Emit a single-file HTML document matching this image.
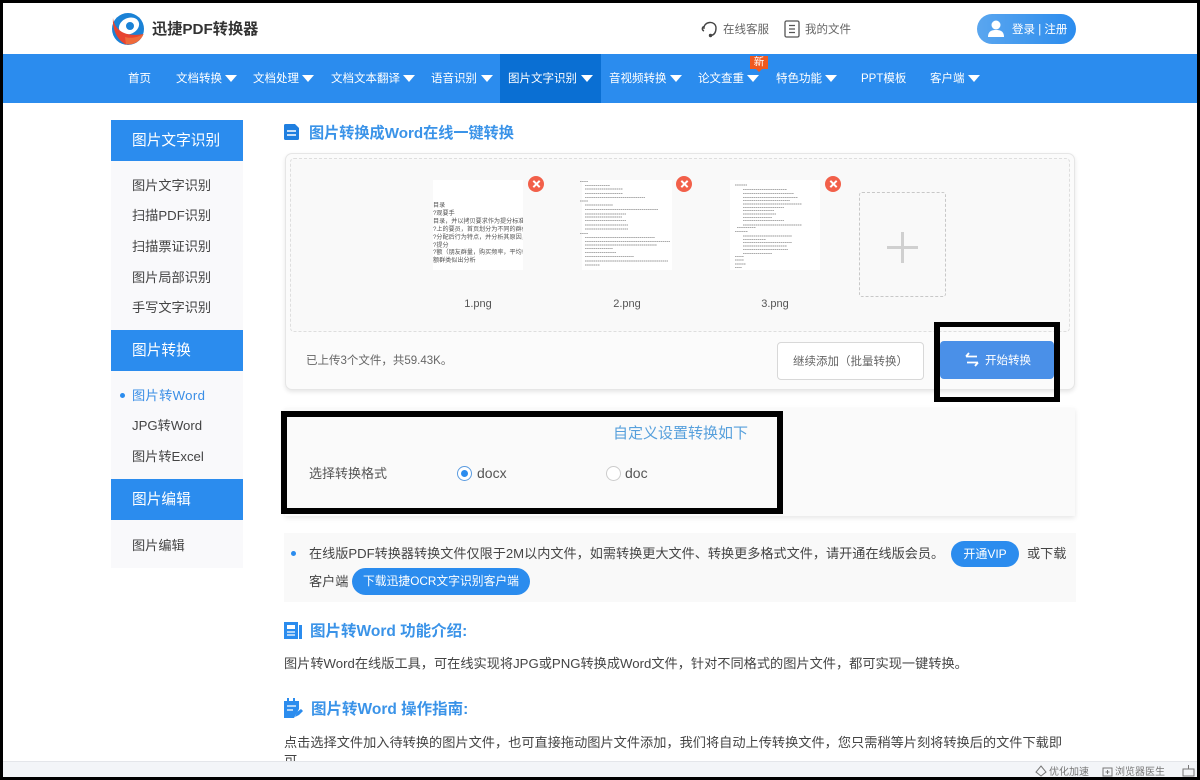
<!DOCTYPE html>
<html lang="zh-CN"><head><meta charset="utf-8"><title>迅捷PDF转换器</title>
<style>
html,body{margin:0;padding:0;background:#fff}
#p{position:relative;width:1200px;height:780px;overflow:hidden;background:#fff;font-family:"Liberation Sans","Noto Sans CJK SC",sans-serif;color:#444}
#p div,#p span.a,#p svg{position:absolute}
.t{position:absolute;white-space:nowrap;line-height:20px}
.n{position:absolute;top:69px;font-size:11.5px;line-height:20px;color:#fff;white-space:nowrap}
.ar{position:absolute;top:75px;width:0;height:0;border-left:6.5px solid transparent;border-right:6.5px solid transparent;border-top:7px solid #fff}
.sh{left:111px;width:132px;height:41px;background:#2b8cee;color:#fff;font-size:14.7px;line-height:42px;text-indent:21px}
.sb{left:111px;width:132px;background:#f9f9fb}
.si{position:absolute;left:132px;font-size:13.2px;line-height:20px;color:#444;white-space:nowrap}
.x{width:16px;height:16px;border-radius:50%;background:#f2604a}
.x:before,.x:after{content:"";position:absolute;left:3.5px;top:7px;width:9px;height:2px;background:#fff;transform:rotate(45deg)}
.x:after{transform:rotate(-45deg)}
.th{background:#fff;width:90px;height:90px;top:180px}
.h3{position:absolute;font-size:15.5px;font-weight:700;color:#3a93e8;line-height:20px;white-space:nowrap}
.ln{fill:none;stroke:#777;stroke-width:.7;stroke-dasharray:1.6 .5}
</style></head><body><div id="p">

<!-- logo -->
<svg style="left:110px;top:12px" width="36" height="35" viewBox="0 0 36 35">
<circle cx="18" cy="17" r="16" fill="#1b82d6"/>
<ellipse cx="19" cy="14" rx="10.500" ry="8" fill="#fff" transform="rotate(-25 19 14)"/>
<circle cx="20" cy="14" r="4" fill="#1b82d6"/>
<path d="M3 6C4 16 13 26 33.500 22C31 29 24 33 16 32.500C8 29 2 18 3 6Z" fill="#e8442f"/>
<path d="M15 25C22 27 28 25 33.500 22C31 29 24 33 16 32.500Z" fill="#ef6a3a"/>
</svg>
<div class="t" style="left:152px;top:20px;font-size:15.200px;font-weight:700;color:#333">迅捷PDF转换器</div>

<!-- head links -->
<svg style="left:700px;top:19px" width="20" height="20" viewBox="0 0 20 20" fill="none" stroke="#444" stroke-width="1.400"><path d="M4 10C3 2 16 1 16 9"/><path d="M4 7.500C2 8 1.500 11 4 12"/><path d="M16 9C16 14 14 16 11 16.500"/><circle cx="10.500" cy="16.500" r="1" fill="#444"/></svg>
<div class="t" style="left:723px;top:20px;font-size:11.500px;color:#666">在线客服</div>
<svg style="left:784px;top:20px" width="16" height="18" viewBox="0 0 16 18" fill="none" stroke="#555" stroke-width="1.300"><rect x="1" y="1" width="14" height="16" rx="1.500"/><path d="M5 5.500H11M5 9H11M5 12.500H11"/></svg>
<div class="t" style="left:805px;top:20px;font-size:11.500px;color:#666">我的文件</div>

<div style="left:977px;top:14px;width:99px;height:30px;border-radius:15px;background:linear-gradient(90deg,#5aa6ef,#2b8cee)"></div>
<svg style="left:987px;top:20px" width="18" height="17" viewBox="0 0 18 17" fill="#fff"><circle cx="9" cy="5" r="4.500"/><path d="M1 17C1 11 5 10 9 10C13 10 17 11 17 17Z"/></svg>
<div class="t" style="left:1012px;top:20px;font-size:11.500px;color:#fff">登录 | 注册</div>

<!-- nav -->
<div style="left:3px;top:54px;width:1194px;height:49px;background:#2b8cee"></div>
<div style="left:500px;top:54px;width:101px;height:49px;background:#0a6fd3"></div>
<span class="n" style="left:128px">首页</span>
<span class="n" style="left:176px">文档转换</span><span class="ar" style="left:225px"></span>
<span class="n" style="left:253px">文档处理</span><span class="ar" style="left:302px"></span>
<span class="n" style="left:331px">文档文本翻译</span><span class="ar" style="left:403px"></span>
<span class="n" style="left:431px">语音识别</span><span class="ar" style="left:481px"></span>
<span class="n" style="left:508px">图片文字识别</span><span class="ar" style="left:581px"></span>
<span class="n" style="left:609px">音视频转换</span><span class="ar" style="left:670px"></span>
<span class="n" style="left:698px">论文查重</span><span class="ar" style="left:747px"></span>
<span class="n" style="left:776px">特色功能</span><span class="ar" style="left:825px"></span>
<span class="n" style="left:861px">PPT模板</span>
<span class="n" style="left:930px">客户端</span><span class="ar" style="left:968px"></span>
<div style="left:750px;top:56px;width:18px;height:13px;background:#f0591f;color:#fff;font-size:10.500px;line-height:13px;text-align:center">新</div>
<div style="left:756px;top:69px;width:0;height:0;border-left:3px solid transparent;border-right:3px solid transparent;border-top:3px solid #f0591f"></div>

<!-- sidebar -->
<div class="sh" style="top:120px">图片文字识别</div>
<div class="sb" style="top:161px;height:169px"></div>
<span class="si" style="top:176px">图片文字识别</span>
<span class="si" style="top:206px">扫描PDF识别</span>
<span class="si" style="top:237px">扫描票证识别</span>
<span class="si" style="top:268px">图片局部识别</span>
<span class="si" style="top:298px">手写文字识别</span>
<div class="sh" style="top:330px">图片转换</div>
<div class="sb" style="top:371px;height:108px"></div>
<div style="left:120px;top:393px;width:5px;height:5px;border-radius:50%;background:#2b8cee"></div>
<span class="si" style="top:386px;color:#3a8ee6;letter-spacing:.35px">图片转Word</span>
<span class="si" style="top:416px">JPG转Word</span>
<span class="si" style="top:447px">图片转Excel</span>
<div class="sh" style="top:479px">图片编辑</div>
<div class="sb" style="top:520px;height:48px"></div>
<span class="si" style="top:536px">图片编辑</span>

<!-- title -->
<svg style="left:284px;top:124px" width="16" height="16" viewBox="0 0 16 16"><path d="M0 1.500Q0 0 1.500 0H11L15 4V14.500Q15 16 13.500 16H1.500Q0 16 0 14.500Z" fill="#1f7fe0"/><path d="M3 7H12M3 11H12" stroke="#fff" stroke-width="1.600"/></svg>
<div class="t" style="left:309px;top:124px;font-size:15.150px;font-weight:700;color:#3a93e8">图片转换成Word在线一键转换</div>

<!-- upload box -->
<div style="left:285px;top:153px;width:788px;height:235px;background:#fbfbfb;border:1px solid #e6e6e6;border-radius:7px;box-shadow:0 2px 4px rgba(0,0,0,.1)"></div>
<div style="left:290px;top:158px;width:778px;height:172px;border:1.500px dashed #dedede;border-radius:4px;background:#f9f9f9"></div>

<div class="th" style="left:433px"></div>
<div style="left:433px;top:202px;width:90px;height:62px;overflow:hidden;font-size:6.100px;line-height:7.900px;color:#555;white-space:nowrap">目录<br>?观要手<br>目录，并以拷贝要求作为提分标准<br>?上的要员，首页划分为不同的群体或子市场<br>?分配后行为特点，并分析其原因，选此基础<br>?提分<br>?额（朋友群量，购买频率，平均每次阶购买<br>额群类似出分析</div>
<div class="x" style="left:528px;top:176px"></div>
<div style="left:433px;top:294px;width:90px;text-align:center;font-size:11px;line-height:20px;color:#555">1.png</div>

<div class="th" style="left:582px"></div>
<svg style="left:580px;top:180px" width="92" height="90">
<path class="ln" d="M0 1.700H8M5 5.700H30M5 9H43M5 13.300H43M5 17.300H65M0 21H8M5 25H33M5 29.300H78M5 34H46M5 37H42M5 40.700H46M5 45H48M5 49H48M0 53.300H8M5 57.300H75M5 61.700H90M5 65H77M5 68.300H33M5 72.700H36M5 76.700H54M5 81H88M5 85H20"/></svg>
<div class="x" style="left:676px;top:176px"></div>
<div style="left:582px;top:294px;width:90px;text-align:center;font-size:11px;line-height:20px;color:#555">2.png</div>

<div class="th" style="left:730px"></div>
<svg style="left:732px;top:182px" width="88" height="90">
<path class="ln" d="M3 3H15M11 7.300H55M11 11.300H62M11 15.700H66M11 18.700H58M11 22H70M11 25.300H52M11 28.700H42M11 32H44M11 35.300H40M11 38.700H52M11 43H70M5 45.700H24M3 49.700H16M11 54H60M11 57.300H34M11 60.700H60M11 64H55M11 67.300H56M11 71.300H40M3 74.700H12M3 78H12M3 82H14M3 85.300H10"/></svg>
<div class="x" style="left:825px;top:176px"></div>
<div style="left:730px;top:294px;width:90px;text-align:center;font-size:11px;line-height:20px;color:#555">3.png</div>

<div style="left:859px;top:192px;width:85px;height:103px;border:1.500px dashed #c8c8c8;border-radius:3px"></div>
<div style="left:887px;top:246px;width:31px;height:3px;background:#d0d0d0"></div>
<div style="left:901px;top:232px;width:3px;height:31px;background:#d0d0d0"></div>

<div class="t" style="left:306px;top:351px;font-size:11.500px;color:#666">已上传3个文件，共59.43K。</div>
<div style="left:777px;top:342px;width:145px;height:36px;background:#fff;border:1px solid #d8d8d8;border-radius:4px;font-size:11.500px;line-height:38px;text-align:center;color:#666">继续添加（批量转换）</div>

<div style="left:934px;top:322px;width:114px;height:70px;border-style:solid;border-color:#000;border-width:5px 6px 5px 6px"></div>
<div style="left:940px;top:341px;width:114px;height:38px;background:#4a90e8;border-radius:4px"></div>
<svg style="left:965px;top:352px" width="14" height="15" viewBox="0 0 14 15" fill="none" stroke="#fff" stroke-width="1.800"><path d="M1 4.500H12M4 1L1 4.500M13 10.500H2M10 14L13 10.500"/></svg>
<div class="t" style="left:985px;top:351px;font-size:11.500px;color:#fff">开始转换</div>

<!-- settings -->
<div style="left:285px;top:408px;width:790px;height:108px;background:#fafafa;box-shadow:0 2px 5px rgba(0,0,0,.1)"></div>
<div style="left:281px;top:411px;width:490px;height:91px;border:6px solid #000;background:#fafafa"></div>
<div class="t" style="left:613px;top:424px;font-size:15px;color:#57a0dc">自定义设置转换如下</div>
<div class="t" style="left:309px;top:464px;font-size:13px;color:#555">选择转换格式</div>
<div style="left:457px;top:466px;width:13px;height:13px;border:1px solid #5a9be0;border-radius:50%;background:#fff"></div>
<div style="left:461px;top:470px;width:7px;height:7px;border-radius:50%;background:#2b8cee"></div>
<div class="t" style="left:477px;top:463px;font-size:14px;color:#555">docx</div>
<div style="left:606px;top:466px;width:13px;height:13px;border:1px solid #ccc;border-radius:50%;background:#fff"></div>
<div class="t" style="left:625px;top:463px;font-size:14px;color:#555">doc</div>

<!-- notice -->
<div style="left:284px;top:533px;width:792px;height:69px;background:#f9f9f9"></div>
<div style="left:291px;top:551px;width:5px;height:5px;border-radius:50%;background:#2b8cee"></div>
<div class="t" style="left:309px;top:544px;font-size:13.140px;color:#444">在线版PDF转换器转换文件仅限于2M以内文件，如需转换更大文件、转换更多格式文件，请开通在线版会员。</div>
<div style="left:951px;top:541px;width:68px;height:26px;border-radius:13px;background:#2b8cee;color:#fff;font-size:12px;line-height:26px;text-align:center">开通VIP</div>
<div class="t" style="left:1027px;top:544px;font-size:13.140px;color:#444">或下载</div>
<div class="t" style="left:309px;top:572px;font-size:13.140px;color:#444">客户端</div>
<div style="left:352px;top:568px;width:178px;height:27px;border-radius:13.500px;background:#2b8cee;color:#fff;font-size:11.800px;line-height:27px;text-align:center">下载迅捷OCR文字识别客户端</div>

<!-- intro -->
<svg style="left:284px;top:622px" width="18" height="17" viewBox="0 0 18 17"><rect width="14" height="17" fill="#2b8cee"/><rect x="15" y="3" width="3" height="14" fill="#2b8cee"/><rect x="3" y="3" width="8" height="4" fill="#fff"/><path d="M3 10H11M3 13H11" stroke="#fff" stroke-width="1.300"/></svg>
<div class="h3" style="left:310px;top:622px">图片转Word 功能介绍:</div>
<div class="t" style="left:284px;top:654px;font-size:13.190px;color:#444">图片转Word在线版工具，可在线实现将JPG或PNG转换成Word文件，针对不同格式的图片文件，都可实现一键转换。</div>

<svg style="left:284px;top:698px" width="19" height="20" viewBox="0 0 19 20"><path d="M0 3H3V0H5V3H9V0H11V3H15V11L10 20H0Z" fill="#2b8cee"/><path d="M3 8H12M3 12H9" stroke="#fff" stroke-width="1.300"/><path d="M11 19L13 14L17 11L19 13L15 17Z" fill="#2b8cee"/></svg>
<div class="h3" style="left:311px;top:700px">图片转Word 操作指南:</div>
<div class="t" style="left:284px;top:733px;font-size:13.190px;color:#444">点击选择文件加入待转换的图片文件，也可直接拖动图片文件添加，我们将自动上传转换文件，您只需稍等片刻将转换后的文件下载即</div>
<div class="t" style="left:284px;top:751px;font-size:13.190px;color:#444">可</div>

<!-- browser status bar -->
<div style="left:0;top:761px;width:1200px;height:16px;background:#f3f5f8;border-top:1px solid #e4e6ea"></div>
<svg style="left:1035px;top:765px" width="12" height="12" fill="none" stroke="#777"><path d="M6 1L11 7L6 11L1 7Z"/></svg>
<div class="t" style="left:1049px;top:765px;font-size:10px;line-height:16px;color:#777">优化加速</div>
<svg style="left:1102px;top:766px" width="11" height="11" fill="none" stroke="#777"><path d="M1 2H10V10H1Z"/><path d="M5.500 4V8M3.500 6H7.500"/></svg>
<div class="t" style="left:1115px;top:765px;font-size:10px;line-height:16px;color:#777">浏览器医生</div>
<svg style="left:1182px;top:765px" width="13" height="12" fill="none" stroke="#777"><path d="M1 4H12V11H1ZM6.500 0V4"/></svg>

<!-- screenshot frame -->
<div style="left:0;top:0;width:1200px;height:2.500px;background:#000"></div>
<div style="left:0;top:0;width:3px;height:780px;background:#000"></div>
<div style="left:1197px;top:0;width:3px;height:780px;background:#000"></div>
<div style="left:0;top:777px;width:1200px;height:3px;background:#000"></div>
</div></body></html>
